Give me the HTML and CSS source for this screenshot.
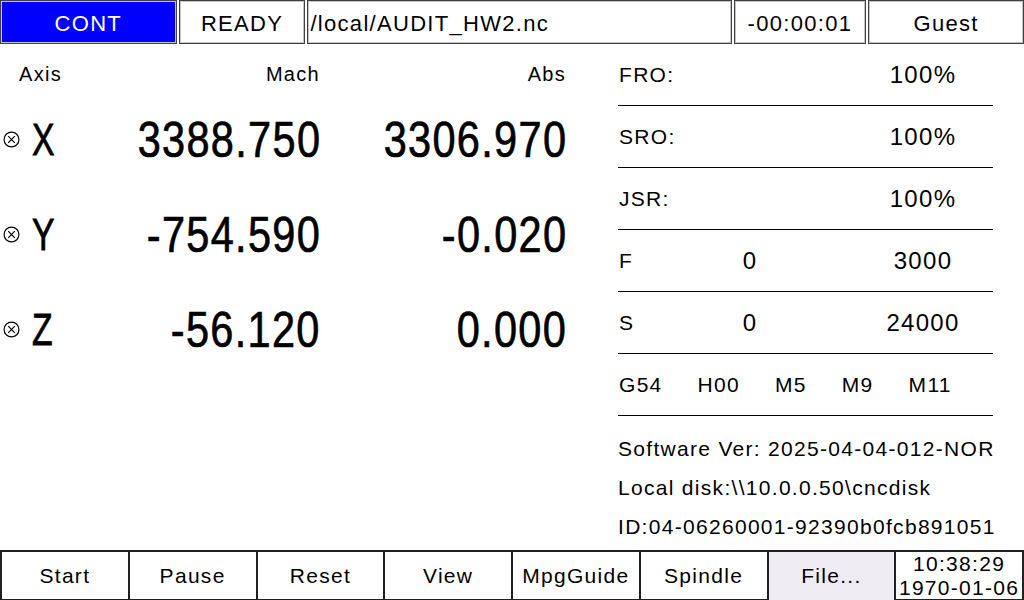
FILE: index.html
```html
<!DOCTYPE html>
<html lang="en">
<head>
    <meta charset="UTF-8">
    <meta name="viewport" content="width=device-width, initial-scale=1.0">
    <title>CNC Position</title>
    <link rel="stylesheet" href="styles.css">
</head>
<body>
    <div class="screen">
        <header class="topbar">
            <div class="cell mode">CONT</div>
            <div class="cell state">READY</div>
            <div class="cell path">/local/AUDIT_HW2.nc</div>
            <div class="cell timer">-00:00:01</div>
            <div class="cell user">Guest</div>
        </header>

        <main class="main">
            <section class="axes">
                <div class="axes-head">
                    <span class="axis-title">Axis</span>
                    <span class="col-title">Mach</span>
                    <span class="col-title">Abs</span>
                </div>
                <div class="axis-row">
                    <span class="axis-id">
                        <svg class="home-mark" viewBox="0 0 16 16"><circle cx="8" cy="8" r="7"/><path d="M4.9 4.9L11.1 11.1M11.1 4.9L4.9 11.1"/></svg><span class="axis-letter">X</span>
                    </span>
                    <span class="coord">3388.750</span>
                    <span class="coord">3306.970</span>
                </div>
                <div class="axis-row">
                    <span class="axis-id">
                        <svg class="home-mark" viewBox="0 0 16 16"><circle cx="8" cy="8" r="7"/><path d="M4.9 4.9L11.1 11.1M11.1 4.9L4.9 11.1"/></svg><span class="axis-letter">Y</span>
                    </span>
                    <span class="coord">-754.590</span>
                    <span class="coord">-0.020</span>
                </div>
                <div class="axis-row">
                    <span class="axis-id">
                        <svg class="home-mark" viewBox="0 0 16 16"><circle cx="8" cy="8" r="7"/><path d="M4.9 4.9L11.1 11.1M11.1 4.9L4.9 11.1"/></svg><span class="axis-letter">Z</span>
                    </span>
                    <span class="coord">-56.120</span>
                    <span class="coord">0.000</span>
                </div>
            </section>

            <section class="status">
                <div class="stat-row">
                    <span class="stat-label">FRO:</span>
                    <span class="stat-val">100%</span>
                </div>
                <div class="stat-row">
                    <span class="stat-label">SRO:</span>
                    <span class="stat-val">100%</span>
                </div>
                <div class="stat-row">
                    <span class="stat-label">JSR:</span>
                    <span class="stat-val">100%</span>
                </div>
                <div class="stat-row">
                    <span class="stat-label">F</span>
                    <span class="stat-mid">0</span>
                    <span class="stat-val">3000</span>
                </div>
                <div class="stat-row">
                    <span class="stat-label">S</span>
                    <span class="stat-mid">0</span>
                    <span class="stat-val">24000</span>
                </div>
                <div class="stat-row modal">
                    <span>G54</span>
                    <span>H00</span>
                    <span>M5</span>
                    <span>M9</span>
                    <span>M11</span>
                </div>
                <div class="info">
                    <div>Software Ver: 2025-04-04-012-NOR</div>
                    <div>Local disk:\\10.0.0.50\cncdisk</div>
                    <div>ID:04-06260001-92390b0fcb891051</div>
                </div>
            </section>
        </main>

        <footer class="softkeys">
            <div class="key">Start</div>
            <div class="key">Pause</div>
            <div class="key">Reset</div>
            <div class="key">View</div>
            <div class="key">MpgGuide</div>
            <div class="key">Spindle</div>
            <div class="key key-active">File...</div>
            <div class="key clock">10:38:29<br>1970-01-06</div>
        </footer>
    </div>
</body>
</html>
```

FILE: styles.css
```css
body {
    margin: 0;
    background: #fff;
    color: #000;
    font-family: "Liberation Sans", Arial, sans-serif;
    letter-spacing: 1.3px;
}
.screen {
    width: 1024px;
    height: 600px;
    display: flex;
    flex-direction: column;
    overflow: hidden;
}

/* top status bar */
.topbar {
    height: 44px;
    display: flex;
    gap: 2px;
    flex-shrink: 0;
}
.cell {
    box-sizing: border-box;
    height: 44px;
    padding-top: 3px;
    border: 1px solid #404040;
    box-shadow: inset 0 0 0 1px #c4c4c4;
    display: flex;
    align-items: center;
    justify-content: center;
    font-size: 22px;
}
.mode {
    width: 177px;
    background: #0000ff;
    color: #fff;
}
.state {
    width: 127px;
}
.path {
    width: 425px;
    justify-content: flex-start;
    padding-left: 2px;
}
.timer {
    width: 133px;
}
.user {
    width: 156px;
}

/* main area */
.main {
    flex: 1;
    display: flex;
}
.axes {
    width: 618px;
}
.axes-head,
.axis-row {
    display: grid;
    grid-template-columns: 130px 190px 246px;
    align-items: center;
}
.axes-head {
    padding: 18px 0 6px;
    line-height: 24px;
    font-size: 20px;
}
.axis-title {
    padding-left: 19px;
}
.col-title {
    text-align: right;
}
.axis-row {
    height: 95px;
}
.axis-id {
    display: flex;
    align-items: center;
    padding-left: 3px;
}
.axis-letter {
    display: inline-block;
    font-size: 45px;
    line-height: 50px;
    letter-spacing: 0;
    -webkit-text-stroke: 0.8px #000;
    transform: scaleX(0.75);
    transform-origin: left center;
}
.home-mark {
    width: 17px;
    height: 17px;
    margin-right: 12px;
    fill: none;
    stroke: #000;
    stroke-width: 1.1;
}
.coord {
    justify-self: end;
    display: inline-block;
    margin-right: -1px;
    font-size: 50px;
    line-height: 50px;
    letter-spacing: 1.6px;
    -webkit-text-stroke: 0.7px #000;
    transform: scaleX(0.83);
    transform-origin: right center;
}

/* right status panel */
.status {
    width: 375px;
}
.stat-row {
    box-sizing: border-box;
    height: 62px;
    border-bottom: 1px solid #000;
    display: grid;
    grid-template-columns: 82px 100px 60px 126px;
    align-items: center;
    font-size: 21px;
}
.stat-label {
    grid-column: 1;
    padding-left: 1px;
}
.stat-mid {
    grid-column: 2;
    text-align: center;
    font-size: 24px;
}
.stat-val {
    grid-column: 4;
    text-align: center;
    font-size: 24px;
}
.modal {
    display: flex;
    gap: 35px;
    padding-left: 1px;
}
.info {
    padding-top: 13px;
    font-size: 21px;
    line-height: 39px;
    white-space: nowrap;
}

/* soft keys */
.softkeys {
    height: 50px;
    box-sizing: border-box;
    border: 1px solid #202020;
    display: grid;
    grid-template-columns: repeat(8, 1fr);
    flex-shrink: 0;
}
.key {
    border: 1px solid #202020;
    display: flex;
    align-items: center;
    justify-content: center;
    font-size: 21px;
}
.key-active {
    background: #f0ecf4;
}
.clock {
    text-align: center;
    line-height: 24px;
}
```
